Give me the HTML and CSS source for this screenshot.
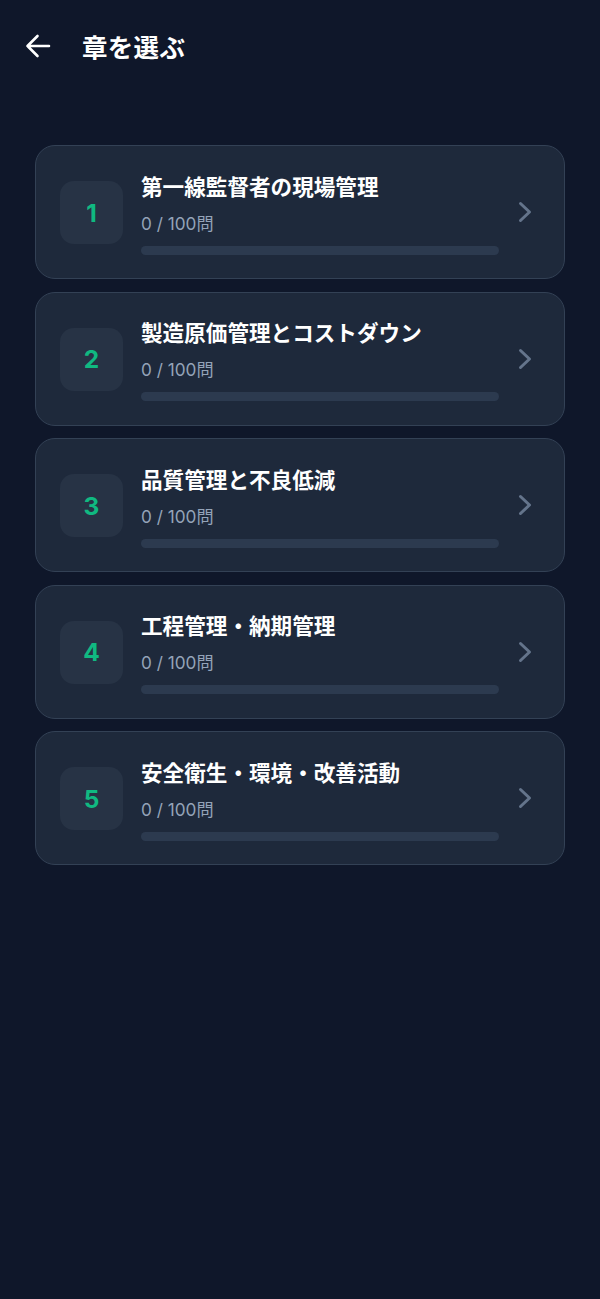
FILE: index.html
```html
<!DOCTYPE html>
<html lang="ja">
<head>
<meta charset="utf-8">
<title>章を選ぶ</title>
<link rel="stylesheet" href="styles.css">
</head>
<body>
<header class="header">
  <button class="back" aria-label="戻る">
    <svg width="26" height="24" viewBox="0 0 26 24" fill="none" stroke="#ffffff" stroke-width="2.6" stroke-linecap="round" stroke-linejoin="round"><path d="M24 12H2.5M12.5 2L2.5 12l10 10"/></svg>
  </button>
  <h1 class="title">章を選ぶ</h1>
</header>
<main class="list">
  <a class="card">
    <div class="num">1</div>
    <div class="info">
      <div class="name">第一線監督者の現場管理</div>
      <div class="count">0 / 100問</div>
      <div class="bar"><div class="fill" style="width:0%"></div></div>
    </div>
    <svg class="chev" width="14" height="22" viewBox="0 0 14 22" fill="none" stroke="#64748b" stroke-width="3" stroke-linecap="round" stroke-linejoin="round"><path d="M2.5 2.5l9 8.5-9 8.5"/></svg>
  </a>
  <a class="card">
    <div class="num">2</div>
    <div class="info">
      <div class="name">製造原価管理とコストダウン</div>
      <div class="count">0 / 100問</div>
      <div class="bar"><div class="fill" style="width:0%"></div></div>
    </div>
    <svg class="chev" width="14" height="22" viewBox="0 0 14 22" fill="none" stroke="#64748b" stroke-width="3" stroke-linecap="round" stroke-linejoin="round"><path d="M2.5 2.5l9 8.5-9 8.5"/></svg>
  </a>
  <a class="card">
    <div class="num">3</div>
    <div class="info">
      <div class="name">品質管理と不良低減</div>
      <div class="count">0 / 100問</div>
      <div class="bar"><div class="fill" style="width:0%"></div></div>
    </div>
    <svg class="chev" width="14" height="22" viewBox="0 0 14 22" fill="none" stroke="#64748b" stroke-width="3" stroke-linecap="round" stroke-linejoin="round"><path d="M2.5 2.5l9 8.5-9 8.5"/></svg>
  </a>
  <a class="card">
    <div class="num">4</div>
    <div class="info">
      <div class="name">工程管理・納期管理</div>
      <div class="count">0 / 100問</div>
      <div class="bar"><div class="fill" style="width:0%"></div></div>
    </div>
    <svg class="chev" width="14" height="22" viewBox="0 0 14 22" fill="none" stroke="#64748b" stroke-width="3" stroke-linecap="round" stroke-linejoin="round"><path d="M2.5 2.5l9 8.5-9 8.5"/></svg>
  </a>
  <a class="card">
    <div class="num">5</div>
    <div class="info">
      <div class="name">安全衛生・環境・改善活動</div>
      <div class="count">0 / 100問</div>
      <div class="bar"><div class="fill" style="width:0%"></div></div>
    </div>
    <svg class="chev" width="14" height="22" viewBox="0 0 14 22" fill="none" stroke="#64748b" stroke-width="3" stroke-linecap="round" stroke-linejoin="round"><path d="M2.5 2.5l9 8.5-9 8.5"/></svg>
  </a>
</main>
</body>
</html>
```

FILE: styles.css
```css
* { box-sizing: border-box; }
html, body { margin: 0; padding: 0; }
body {
  background: #0f172a;
  color: #ffffff;
  font-family: "Inter", "Noto Sans CJK JP", "Noto Sans", sans-serif;
  width: 600px;
  min-height: 1299px;
}
.header {
  display: flex;
  align-items: center;
  height: 92px;
  padding-left: 25px;
}
.back {
  background: none;
  border: none;
  padding: 0;
  width: 26px;
  height: 24px;
  display: flex;
  align-items: center;
  justify-content: center;
  cursor: pointer;
}
.title {
  margin: 0 0 0 31px;
  font-size: 25.5px;
  font-weight: 700;
  line-height: 32px;
  font-family: "Noto Sans CJK JP", sans-serif;
  letter-spacing: 0.3px;
}
.list {
  display: flex;
  flex-direction: column;
  gap: 12.5px;
  padding: 53px 35px 0;
}
.card {
  display: flex;
  align-items: center;
  height: 134px;
  background: #1e293b;
  border: 1px solid #334155;
  border-radius: 20px;
  padding: 0 32px 0 24px;
}
.num {
  flex: none;
  width: 63px;
  height: 63px;
  border-radius: 14px;
  background: #273345;
  color: #10b981;
  font-size: 24.5px;
  font-weight: 700;
  display: flex;
  align-items: center;
  justify-content: center;
  margin-top: 1px;
}
.info {
  flex: 1;
  margin-left: 18px;
  margin-right: 19px;
  display: flex;
  flex-direction: column;
  padding-top: 2px;
}
.name {
  font-family: "Noto Sans CJK JP", sans-serif;
  font-size: 21.6px;
  font-weight: 700;
  line-height: 28px;
  color: #ffffff;
}
.count {
  margin-top: 12px;
  font-size: 17.2px;
  line-height: 24px;
  color: #94a3b8;
}
.bar {
  margin-top: 10px;
  height: 9px;
  border-radius: 5px;
  background: #2c3a4f;
  overflow: hidden;
}
.fill {
  height: 100%;
  background: #10b981;
}
.chev { flex: none; }
```
